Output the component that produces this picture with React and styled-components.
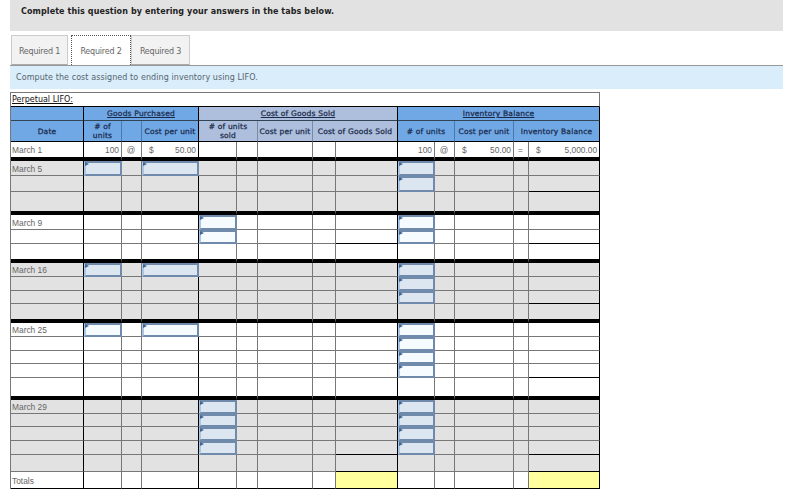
import React from "react";
import styled, { createGlobalStyle } from "styled-components";

const GlobalStyle = createGlobalStyle`
  html, body {
    margin: 0;
    padding: 0;
    background: #fff;
    font-family: "DejaVu Sans", Verdana, sans-serif;
  }
`;

const Page = styled.div`
  width: 805px;
  height: 494px;
  padding-left: 10px;
  box-sizing: border-box;
  overflow: hidden;
`;
const Banner = styled.div`
  width: 773px;
  height: 31px;
  box-sizing: border-box;
  padding: 6px 0 0 11px;
  background: #e2e2e2;
  color: #222;
  font-size: 8px;
  font-weight: bold;
  line-height: 11px;
  letter-spacing: 0.1px;
`;
const Tabs = styled.div`
  display: flex;
  height: 30px;
  margin-top: 4px;
  padding-left: 1px;
`;
const Tab = styled.div`
  width: ${(p) => p.$w}px;
  margin-right: ${(p) => p.$gap}px;
  display: flex;
  align-items: center;
  justify-content: center;
  box-sizing: border-box;
  padding-top: 2px;
  color: #666;
  font-size: 8px;
  letter-spacing: -0.2px;
  background: ${(p) => (p.$active ? "#fff" : "#f2f2f2")};
  border: ${(p) => (p.$active ? "1px dotted #555" : "1px solid #ccc")};
  border-bottom: ${(p) => (p.$active ? "none" : "1px solid #aaa")};
`;
const Prompt = styled.div`
  width: 773px;
  height: 24px;
  box-sizing: border-box;
  padding: 0 0 0 6px;
  display: flex;
  align-items: center;
  background: #d9edfa;
  border-top: 1px solid #999;
  color: #56646e;
  font-size: 8px;
  letter-spacing: 0.08px;
`;
const Sheet = styled.table`
  margin-top: 3px;
  width: 590px;
  table-layout: fixed;
  border-collapse: separate;
  border-spacing: 0;
  border-left: 1px solid #777;
  font-family: "Liberation Sans", Arial, sans-serif;
`;
const Row = styled.tr`
  height: ${(p) => p.$h}px;
`;
const TitleCell = styled.td`
  height: 15px;
  padding: 0 0 0 1px;
  border-top: 1px solid #777;
  border-right: 1px solid #777;
  border-bottom: 1px solid #000;
  box-sizing: border-box;
  font-family: "DejaVu Sans", Verdana, sans-serif;
  font-size: 8px;
  line-height: 10px;
  color: #111;
  text-decoration: underline;
`;
const HeadCell = styled.th`
  padding: 0;
  box-sizing: border-box;
  white-space: nowrap;
  background: ${(p) => (p.$sold ? "#adbfdc" : "#70a8e6")};
  border-right: 1px solid ${(p) => (p.$end ? "#000" : p.$sold ? "#7a8aa5" : "#4a78ad")};
  border-bottom: 1px solid ${(p) => (p.$group ? "#345" : "#000")};
  color: #1a2a4a;
  font-family: "DejaVu Sans", Verdana, sans-serif;
  font-size: 7.5px;
  font-weight: normal;
  line-height: 9px;
  letter-spacing: 0.2px;
  text-align: center;
  text-decoration: ${(p) => (p.$group ? "underline" : "none")};
  -webkit-text-stroke: 0.25px #1a2a4a;
`;
const Cell = styled.td`
  padding: 1px 2px 0 1px;
  box-sizing: border-box;
  overflow: hidden;
  white-space: nowrap;
  background: ${(p) => (p.$yellow ? "#ffff9d" : p.$shade ? "#e2e2e2" : "#fff")};
  border-right: 1px solid ${(p) => (p.$end ? "#000" : "#777")};
  border-bottom: ${(p) => (p.$thick ? "4px solid #000" : `1px solid ${p.$dark ? "#000" : "#777"}`)};
  color: #666;
  font-size: 8.4px;
  line-height: 10px;
`;
const CenterCell = styled(Cell)`
  text-align: center;
`;
const NumberCell = styled(Cell)`
  text-align: right;
`;
const Money = styled.div`
  display: flex;
  justify-content: space-between;
  padding-left: 6px;
`;
const InputCell = styled.td`
  position: relative;
  padding: 0;
  box-sizing: border-box;
  background: ${(p) => (p.$shade ? "#dce6f1" : "#f6fbff")};
  border: 2px solid #6f8aab;
  border-left-color: #a9c6e3;
  &::before {
    content: "";
    position: absolute;
    top: -1px;
    left: -1px;
    border-top: 2px solid transparent;
    border-bottom: 2px solid transparent;
    border-left: 4px solid #3f6596;
  }
`;

// column widths, left to right
const columns = [73, 38, 20, 57, 38, 21, 55, 23, 62, 37, 20, 59, 15, 71];
// black right edge after these columns
const ends = [0, 3, 8, 13];

const sections = [
  {
    date: "March 5",
    shade: true,
    rows: [
      { h: 15, inputs: [1, 3, 9] },
      { h: 16, inputs: [9], darkInv: true },
      { h: 23 },
    ],
  },
  {
    date: "March 9",
    rows: [
      { h: 15, inputs: [4, 9] },
      { h: 14, inputs: [4, 9], darkCost: true, darkInv: true },
      { h: 19 },
    ],
  },
  {
    date: "March 16",
    shade: true,
    rows: [
      { h: 14, inputs: [1, 3, 9] },
      { h: 14, inputs: [9] },
      { h: 13, inputs: [9], darkInv: true },
      { h: 19 },
    ],
  },
  {
    date: "March 25",
    rows: [
      { h: 14, inputs: [1, 3, 9] },
      { h: 14, inputs: [9] },
      { h: 13, inputs: [9] },
      { h: 14, inputs: [9], darkInv: true },
      { h: 22 },
    ],
  },
  {
    date: "March 29",
    shade: true,
    rows: [
      { h: 14, inputs: [4, 9] },
      { h: 13, inputs: [4, 9] },
      { h: 14, inputs: [4, 9] },
      { h: 14, inputs: [4, 9], darkCost: true, darkInv: true },
      { h: 17, dark: true },
    ],
  },
];

const SectionRows = ({ section }) =>
  section.rows.map((row, r) => {
    const last = r === section.rows.length - 1;
    return (
      <Row key={r} $h={row.h}>
        {columns.map((_, c) => {
          const inputs = row.inputs || [];
          if (inputs.includes(c)) return <InputCell key={c} $shade={section.shade} />;
          const props = {
            $shade: section.shade,
            $end: ends.includes(c),
            $thick: last && !row.dark,
            $dark: (row.dark && (c === 8 || c === 13)) || (row.darkCost && c === 8) || (row.darkInv && c === 13),
          };
          return (
            <Cell key={c} {...props}>
              {c === 0 && r === 0 ? section.date : null}
            </Cell>
          );
        })}
      </Row>
    );
  });

export default function App() {
  return (
    <Page>
      <GlobalStyle />
      <Banner>Complete this question by entering your answers in the tabs below.</Banner>
      <Tabs>
        <Tab $w={57} $gap={3}>Required 1</Tab>
        <Tab $w={60} $active>Required 2</Tab>
        <Tab $w={59}>Required 3</Tab>
      </Tabs>
      <Prompt>Compute the cost assigned to ending inventory using LIFO.</Prompt>
      <Sheet>
        <colgroup>
          {columns.map((w, i) => (
            <col key={i} width={w} />
          ))}
        </colgroup>
        <tbody>
          <Row $h={15}>
            <TitleCell colSpan={14}>Perpetual LIFO:</TitleCell>
          </Row>
          <Row $h={14}>
            <HeadCell $group $end />
            <HeadCell $group $end colSpan={3}>Goods Purchased</HeadCell>
            <HeadCell $group $sold $end colSpan={5}>Cost of Goods Sold</HeadCell>
            <HeadCell $group $end colSpan={5}>Inventory Balance</HeadCell>
          </Row>
          <Row $h={21}>
            <HeadCell $end>Date</HeadCell>
            <HeadCell>
              # of
              <br />
              units
            </HeadCell>
            <HeadCell />
            <HeadCell $end>Cost per unit</HeadCell>
            <HeadCell $sold colSpan={2}>
              # of units
              <br />
              sold
            </HeadCell>
            <HeadCell $sold>Cost per unit</HeadCell>
            <HeadCell $sold $end colSpan={2}>Cost of Goods Sold</HeadCell>
            <HeadCell colSpan={2}># of units</HeadCell>
            <HeadCell>Cost per unit</HeadCell>
            <HeadCell $end colSpan={2}>Inventory Balance</HeadCell>
          </Row>
          <Row $h={19}>
            <Cell $end $thick>March 1</Cell>
            <NumberCell $thick>100</NumberCell>
            <CenterCell $thick>@</CenterCell>
            <Cell $end $thick><Money><span>$</span><span>50.00</span></Money></Cell>
            <Cell $thick />
            <Cell $thick />
            <Cell $thick />
            <Cell $thick />
            <Cell $end $thick />
            <NumberCell $thick>100</NumberCell>
            <CenterCell $thick>@</CenterCell>
            <Cell $thick><Money><span>$</span><span>50.00</span></Money></Cell>
            <CenterCell $thick>=</CenterCell>
            <Cell $end $thick><Money><span>$</span><span>5,000.00</span></Money></Cell>
          </Row>
          {sections.map((section) => (
            <SectionRows key={section.date} section={section} />
          ))}
          <Row $h={17}>
            {columns.map((_, c) => (
              <Cell key={c} $end={ends.includes(c)} $dark $yellow={c === 8 || c === 13}>
                {c === 0 ? "Totals" : null}
              </Cell>
            ))}
          </Row>
        </tbody>
      </Sheet>
    </Page>
  );
}
